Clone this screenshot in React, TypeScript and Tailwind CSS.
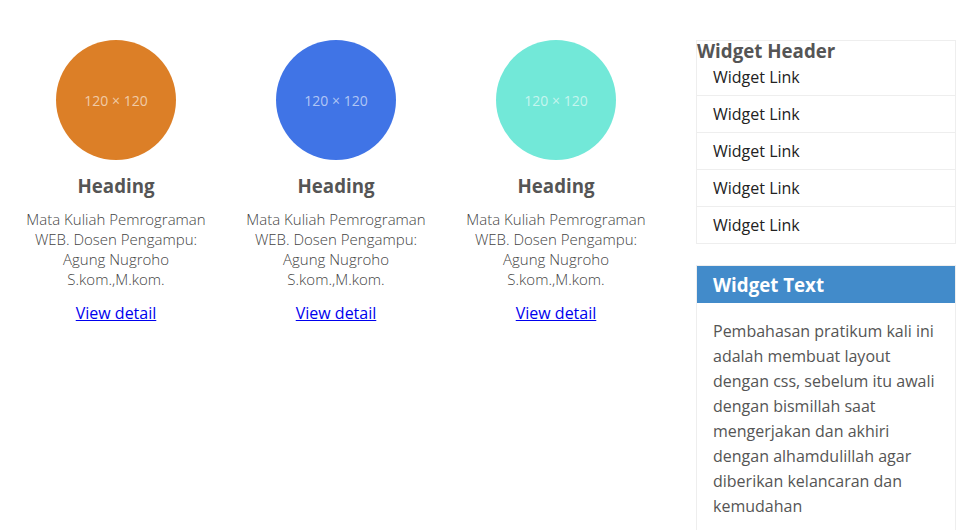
const CARDS = [
  { bg: "bg-[#dc7f27]" },
  { bg: "bg-[#4074e6]" },
  { bg: "bg-[#72e8d8]" },
];

const LINKS = ["Widget Link", "Widget Link", "Widget Link", "Widget Link", "Widget Link"];

export default function App() {
  return (
    <div className="min-h-[530px] bg-white font-['Open_Sans',sans-serif] text-[#555]">
      <div className="flex pt-10">
        <main className="w-[696px] flex pl-[6px]">
          {CARDS.map((c, i) => (
            <div key={i} className="w-[220px] px-5 flex flex-col items-center text-center">
              <div className={`w-[120px] h-[120px] rounded-full ${c.bg} flex items-center justify-center`}>
                <span className="text-[14px] leading-[20px] mt-[1px] text-white/60">120 × 120</span>
              </div>
              <h2 className="mt-[13px] text-[18.72px] leading-[26px] font-bold">Heading</h2>
              <p className="mt-[10px] text-[15px] leading-[20px] font-light text-[#444]">
                Mata Kuliah Pemrograman WEB. Dosen Pengampu: Agung Nugroho S.kom.,M.kom.
              </p>
              <a href="#" className="mt-[13px] text-[16px] leading-[22px] text-[#0000ee] underline">
                View detail
              </a>
            </div>
          ))}
        </main>
        <aside className="w-[260px] flex flex-col gap-[21px]">
          <div className="border border-[#eee]">
            <h3 className="text-[18.72px] leading-[19px] font-bold">Widget Header</h3>
            <ul>
              {LINKS.map((l, i) => (
                <li
                  key={i}
                  className={`px-4 text-[16px] text-[#222] ${i === 0 ? "h-[35px] leading-[35px]" : "h-[37px] leading-[36px] border-t border-[#eee]"}`}
                >
                  {l}
                </li>
              ))}
            </ul>
          </div>
          <div className="border border-[#eee]">
            <h3 className="bg-[#428bca] text-white text-[18.72px] leading-[37px] font-bold px-4">Widget Text</h3>
            <p className="px-4 pt-[16px] pb-4 text-[16px] leading-[25px] text-[#555]">
              Pembahasan pratikum kali ini adalah membuat layout dengan css, sebelum itu awali dengan bismillah saat mengerjakan dan akhiri dengan alhamdulillah agar diberikan kelancaran dan kemudahan
            </p>
          </div>
        </aside>
      </div>
    </div>
  );
}
